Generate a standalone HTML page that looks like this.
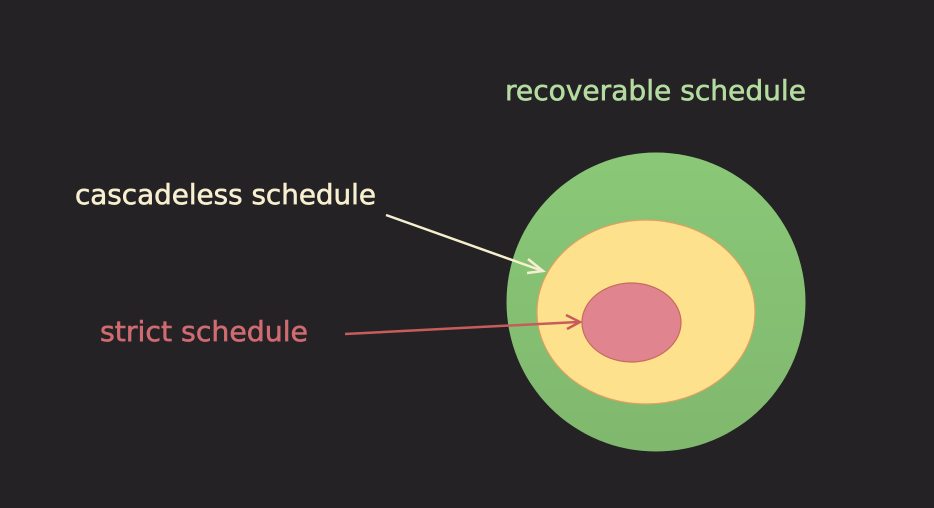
<!DOCTYPE html>
<html><head><meta charset="utf-8"><style>
html,body{margin:0;padding:0;background:#242224;width:934px;height:508px;overflow:hidden}
svg{display:block}
text{font-family:"DejaVu Sans","Liberation Sans",sans-serif;font-size:28px;stroke-width:0.6}
</style></head><body>
<svg width="934" height="508" viewBox="0 0 934 508">
<rect width="934" height="508" fill="#242224"/>
<defs>
<linearGradient id="g" x1="0" y1="0" x2="0" y2="1"><stop offset="0" stop-color="#8ac877"/><stop offset="1" stop-color="#80b86e"/></linearGradient>
</defs>
<circle cx="656" cy="302" r="149.5" fill="url(#g)"/>
<ellipse cx="646" cy="312" rx="109" ry="92" fill="#fde18c" stroke="#e2a060" stroke-width="1.2"/>
<ellipse cx="631.5" cy="322.5" rx="49.5" ry="39.5" fill="#e08590" stroke="#c86a5a" stroke-width="1.2"/>
<line x1="386" y1="215" x2="540" y2="270" stroke="#f6efcf" stroke-width="2.5"/>
<path d="M528 259 L543 271 L527 273" fill="none" stroke="#f6efcf" stroke-width="2.5" stroke-linejoin="miter"/>
<line x1="345" y1="334" x2="578" y2="322" stroke="#c85c5c" stroke-width="2.5"/>
<path d="M566 315 L580 322 L567 329" fill="none" stroke="#c85c5c" stroke-width="2.5"/>
<text x="505" y="100" fill="#b5dca0" stroke="#b5dca0" textLength="301" lengthAdjust="spacingAndGlyphs">recoverable schedule</text>
<text x="75" y="204" fill="#f7efcf" stroke="#f7efcf" textLength="301" lengthAdjust="spacingAndGlyphs">cascadeless schedule</text>
<text x="100" y="341" fill="#d06b72" stroke="#d06b72" textLength="208" lengthAdjust="spacingAndGlyphs">strict schedule</text>
</svg>
</body></html>
